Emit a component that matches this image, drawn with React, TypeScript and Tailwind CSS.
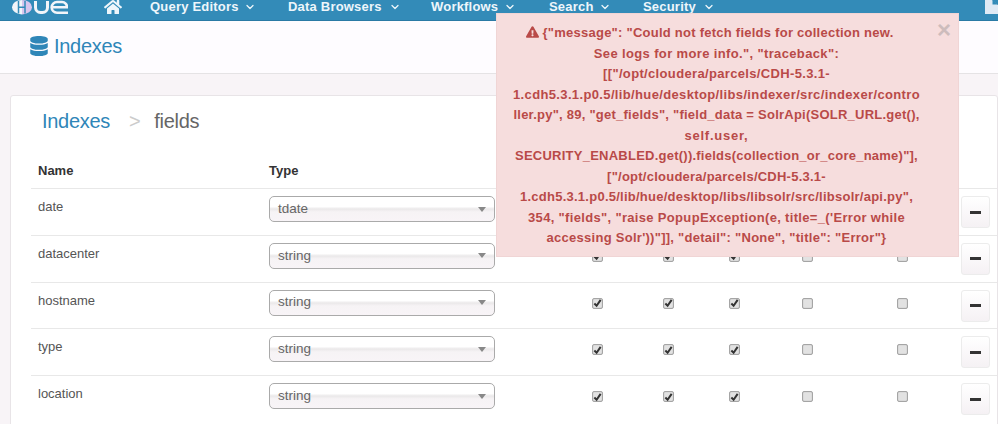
import { FaDatabase, FaHome, FaExclamationTriangle } from "react-icons/fa";
import { FiChevronDown } from "react-icons/fi";

const font = { fontFamily: '"Liberation Sans", Arial, sans-serif' };

function NavItem({ label, w, ml }: { label: string; w: string; ml: string }) {
  return (
    <div className={`flex items-center font-bold text-[13px] tracking-[0.2px] text-[#eef6fb] ${ml}`}>
      <span className={`${w} whitespace-nowrap`}>{label}</span>
      <FiChevronDown className="ml-[4px] w-[12px] h-[12px]" strokeWidth={2.5} />
    </div>
  );
}

function Check({ on }: { on: boolean }) {
  return (
    <div className="w-[11px] h-[11px] mt-[8px] rounded-[2px] border border-[#a5a5a5] bg-[#e2e2e2] shadow-[inset_0_0_1px_#999] flex items-center justify-center">
      {on && (
        <svg viewBox="0 0 10 10" className="w-[10px] h-[10px]">
          <path d="M1.5 5.5 L4 8 L8.5 1.5" fill="none" stroke="#333" strokeWidth="2.2" />
        </svg>
      )}
    </div>
  );
}

const rows = [
  ["date", "tdate"],
  ["datacenter", "string"],
  ["hostname", "string"],
  ["type", "string"],
  ["location", "string"],
];

const lines: [string, string][] = [
  ['{"message": "Could not fetch fields for collection new.', "tracking-[0.25px] pr-[35px]"],
  ['See logs for more info.", "traceback":', "tracking-[0.36px] pr-[22px]"],
  ['[["/opt/cloudera/parcels/CDH-5.3.1-', "tracking-[0.34px] pr-[22px]"],
  ["1.cdh5.3.1.p0.5/lib/hue/desktop/libs/indexer/src/indexer/contro", "tracking-[0.36px] pr-[22px]"],
  ['ller.py", 89, "get_fields", "field_data = SolrApi(SOLR_URL.get(),', "tracking-[0.24px] pr-[22px]"],
  ["self.user,", "tracking-[0.76px] pr-[22px]"],
  ['SECURITY_ENABLED.get()).fields(collection_or_core_name)"],', "tracking-[0.24px] pr-[22px]"],
  ['["/opt/cloudera/parcels/CDH-5.3.1-', "tracking-[0.24px] pr-[22px]"],
  ['1.cdh5.3.1.p0.5/lib/hue/desktop/libs/libsolr/src/libsolr/api.py",', "tracking-[0.25px] pr-[22px]"],
  ['354, "fields", "raise PopupException(e, title=_(\'Error while', "tracking-[0.33px] pr-[22px]"],
  ['accessing Solr\'))"]], "detail": "None", "title": "Error"}', "tracking-[0.27px] pr-[22px]"],
];

export default function App() {
  return (
    <div className="relative w-[998px] h-[424px] overflow-hidden bg-[#f8f4f7]" style={font}>
      <div className="h-[21px] bg-[#338bb8] border-b border-[#2a7aa5] flex items-start overflow-hidden">
        <div className="flex items-center h-[14px] w-full">
          <svg viewBox="0 0 56 15" className="ml-[12px] w-[56px] h-[15px] shrink-0 mt-[1px]">
            <path d="M10 0A10 7.2 0 0 0 10 14.4Z" fill="#f2f5f9" />
            <path d="M10 0A10 7.2 0 0 1 10 14.4Z" fill="#d9c6ee" />
            <path d="M6.5 1v12.4M13 1v12.4M6.5 7.2h6.5" stroke="#338bb8" strokeWidth="1.5" fill="none" />
            <path d="M23.5 1v6.5a5 5 0 0 0 5 5h2a5 5 0 0 0 5-5V1" fill="none" stroke="#f2f5f9" strokeWidth="3" />
            <path d="M56 12.7H45a5.3 5.3 0 0 1 0-10.7h5a5 5 0 0 1 5 5.3H41" fill="none" stroke="#f2f5f9" strokeWidth="2.6" />
          </svg>
          <FaHome className="ml-[36px] w-[18px] h-[16px] text-[#eef6fb] shrink-0" />
          <NavItem label="Query Editors" w="w-[90px]" ml="ml-[28px]" />
          <NavItem label="Data Browsers" w="w-[97px]" ml="ml-[32px]" />
          <NavItem label="Workflows" w="w-[69px]" ml="ml-[30px]" />
          <NavItem label="Search" w="w-[46px]" ml="ml-[33px]" />
          <NavItem label="Security" w="w-[56px]" ml="ml-[32px]" />
          <svg viewBox="0 0 13 14" className="ml-auto w-[13px] h-[14px] shrink-0 -mt-[1px]">
            <path d="M0 0H7L13 5V14H0Z" fill="#dfeaf5" />
            <path d="M7.5 0V4.5H13Z" fill="#338bb8" />
          </svg>
        </div>
      </div>

      <div className="h-[53px] bg-[#fefcff] border-b border-[#e5e3e5] flex items-center pl-[30px] pb-[2px]">
        <FaDatabase className="w-[18px] h-[20px] text-[#2f86b8]" />
        <span className="ml-[6px] text-[20px] tracking-[-0.3px] text-[#2f86b8]">Indexes</span>
      </div>

      <div className="ml-[10px] mt-[21px] bg-white border border-[#e8e4e7] rounded-[3px] h-[400px] pl-[20px]">
        <div className="h-[50px] pl-[11px] flex items-center text-[20px] tracking-[-0.3px] pb-[1px]">
          <span className="text-[#2f86b8]">Indexes</span>
          <span className="ml-[19px] text-[#cccccc]">&gt;</span>
          <span className="ml-[14px] text-[#666666]">fields</span>
        </div>
        <div className="h-[43px] grid grid-cols-[231px_1fr] items-center border-b border-[#e8e8e8] text-[13px] font-bold text-[#333] pt-[7px]">
          <span className="pl-[7px]">Name</span>
          <span className="pl-[7px]">Type</span>
        </div>
        {rows.map(([name, type]) => (
          <div
            key={name}
            className="h-[46.8px] grid grid-cols-[231px_300px_70px_72px_60px_86px_104px_1fr] items-start border-b border-[#e8e8e8] last:border-b-0 pt-[7px] text-[13px] text-[#555]"
          >
            <span className="pl-[7px] leading-[22px]">{name}</span>
            <div className="pl-[7px]">
              <div className="w-[226px] h-[26px] rounded-[5px] border border-[#aaaaaa] bg-[linear-gradient(#ffffff_0%,#ffffff_40%,#eae8e9_50%,#f6f3f5_62%,#f8f4f7_100%)] flex items-center justify-between pl-[8px] pr-[8px]">
                <span className="text-[13.5px] text-[#666]">{type}</span>
                <span className="w-0 h-0 border-x-[4px] border-x-transparent border-t-[5px] border-t-[#888]" />
              </div>
            </div>
            {[true, true, true, false, false].map((on, i) => (
              <div key={i} className="flex justify-center">
                <Check on={on} />
              </div>
            ))}
            <div className="pl-[7px]">
              <div className="w-[29px] h-[32px] rounded-[3px] border border-[#ececec] bg-[linear-gradient(#ffffff,#f5f1f4)] flex items-center justify-center">
                <span className="w-[11px] h-[3px] bg-[#333]" />
              </div>
            </div>
          </div>
        ))}
      </div>

      <div className="absolute left-[496px] top-[13px] w-[463px] h-[244px] bg-[#f6dddd] border border-[#f0d5d5] pt-[9px] text-center text-[13px] leading-[20.5px] font-bold text-[#b94a48]">
        {lines.map(([l, cls], i) => (
          <div key={i} className={`whitespace-nowrap ${cls}`}>
            {i === 0 && <FaExclamationTriangle className="inline w-[13px] h-[12px] mr-[3px] -mt-[3px]" />}
            {l}
          </div>
        ))}
        <span className="absolute right-[7px] top-[6px] text-[24px] leading-[20px] font-bold text-[#cdbcbc]">×</span>
      </div>
    </div>
  );
}
